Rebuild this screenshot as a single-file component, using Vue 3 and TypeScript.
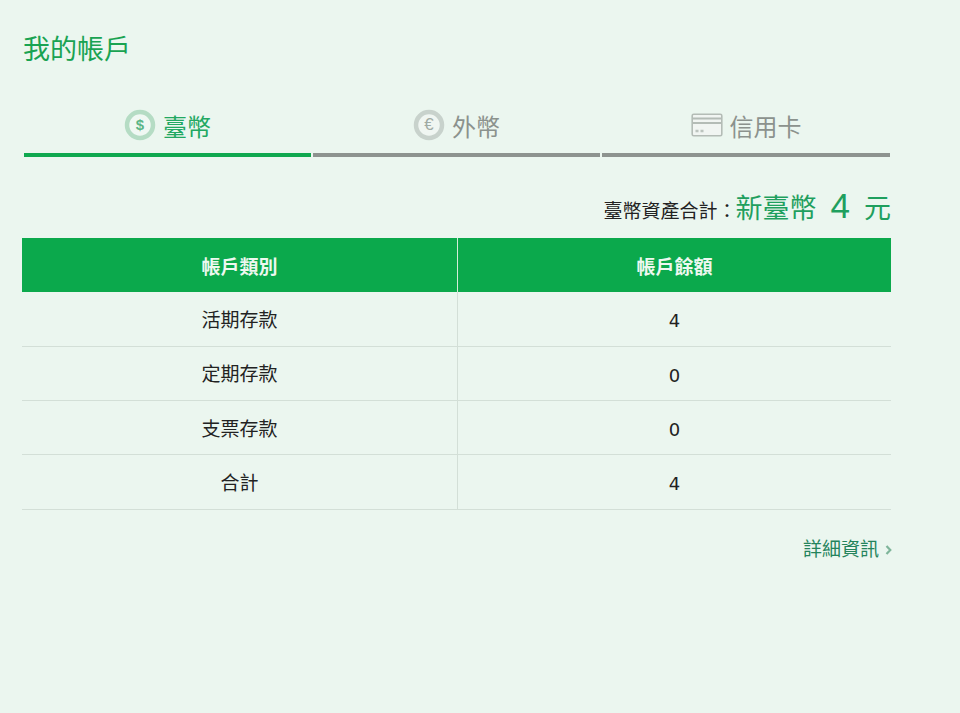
<script setup lang="ts">
interface Row { name: string; value: number }
const rows: Row[] = [
  { name: '活期存款', value: 4 },
  { name: '定期存款', value: 0 },
  { name: '支票存款', value: 0 },
  { name: '合計', value: 4 },
]
</script>

<template>
  <main class="page">
    <h1 class="title">我的帳戶</h1>
    <nav class="tabs">
      <div class="tab active">
        <svg class="coin" width="32" height="32" viewBox="0 0 32 32">
          <circle cx="16" cy="16" r="13" fill="#f0f8f3" stroke="#b5dcc4" stroke-width="4.5" />
          <text x="16" y="21" text-anchor="middle" class="coin-text" fill="#5cb587">$</text>
        </svg>
        <span>臺幣</span>
      </div>
      <div class="tab">
        <svg class="coin" width="32" height="32" viewBox="0 0 32 32">
          <circle cx="16" cy="16" r="13" fill="#f0f6f2" stroke="#c8d2cc" stroke-width="4.5" />
          <text x="16" y="21" text-anchor="middle" class="coin-text thin" fill="#a0aaa3">€</text>
        </svg>
        <span>外幣</span>
      </div>
      <div class="tab">
        <svg class="card" width="32" height="24" viewBox="0 0 32 24" fill="none">
          <rect x="1.2" y="1.2" width="29.6" height="21.6" rx="1.5" fill="#f1f5f2" stroke="#b4bcb6" stroke-width="1.6" />
          <path d="M1.5 5.5H30.5M1.5 10H30.5" stroke="#b4bcb6" stroke-width="1.8" />
          <path d="M4.5 18H7.5M9.5 18H12.5" stroke="#bcc4be" stroke-width="2.4" />
        </svg>
        <span>信用卡</span>
      </div>
    </nav>
    <p class="total">
      <span class="total-label">臺幣資產合計：</span><span class="total-value">新臺幣<b>4</b>元</span>
    </p>
    <table class="grid">
      <thead>
        <tr><th>帳戶類別</th><th>帳戶餘額</th></tr>
      </thead>
      <tbody>
        <tr v-for="row in rows" :key="row.name">
          <td>{{ row.name }}</td>
          <td class="num">{{ row.value }}</td>
        </tr>
      </tbody>
    </table>
    <div class="more">
      <span>詳細資訊</span>
      <svg width="7" height="10" viewBox="0 0 7 10" fill="none"><path d="M1.5 1L5.3 5L1.5 9" stroke="#7fb59a" stroke-width="2.2" /></svg>
    </div>
  </main>
</template>

<style>
html, body { margin: 0; background: #ebf6ef; }
</style>

<style scoped>
.page {
  box-sizing: border-box;
  width: 960px;
  height: 713px;
  padding: 33px 68px 0 22px;
  background: #ebf6ef;
  font-family: "Liberation Sans", "Noto Sans CJK TC", sans-serif;
  overflow: hidden;
}
.title {
  margin: 0 0 0 1px;
  font-size: 27px;
  line-height: 34px;
  font-weight: 400;
  color: #19a352;
}
.tabs {
  display: grid;
  grid-template-columns: 287px 287px 288px;
  column-gap: 2px;
  margin: 32px 1px 0 2px;
}
.tab {
  display: flex;
  align-items: center;
  justify-content: center;
  gap: 7px;
  height: 58px;
  padding-bottom: 2px;
  box-sizing: border-box;
  border-bottom: 4px solid #8d938f;
  font-size: 24px;
  color: #8b928d;
}
.tab.active {
  border-bottom-color: #0fa84f;
  color: #22a862;
}
.coin-text {
  font-family: "Liberation Sans", sans-serif;
  font-size: 15px;
  font-weight: 700;
}
.coin-text.thin { font-weight: 400; font-size: 17px; }
.total {
  display: flex;
  align-items: center;
  justify-content: flex-end;
  height: 38px;
  margin: 30px 1px 13px 0;
  box-sizing: border-box;
}
.total-label {
  font-size: 19px;
  color: #222;
  margin-right: -1px;
  margin-top: 7px;
}
.total-value {
  font-size: 27px;
  color: #1f9f5e;
}
.total-value b {
  font-family: "Liberation Sans", sans-serif;
  font-weight: 400;
  font-size: 35px;
  margin: 0 14px;
}
.grid {
  width: 869px;
  margin-top: 0;
  border-collapse: collapse;
  table-layout: fixed;
}
th:first-child, td:first-child { width: 435px; }
th {
  height: 54px;
  padding: 0;
  background: #0ba94c;
  color: #eef8f0;
  font-size: 19px;
  font-weight: 700;
}
th + th { border-left: 1px solid #d4ecd9; }
td {
  height: 54.25px;
  padding: 0 0 1px;
  box-sizing: border-box;
  text-align: center;
  font-size: 19px;
  color: #222;
  border-bottom: 1px solid #d3dfd7;
}
td + td { border-left: 1px solid #d3dfd7; }
td.num { padding-top: 4px; padding-bottom: 0; font-family: "DejaVu Sans", sans-serif; font-size: 18px; }
.more {
  display: flex;
  align-items: center;
  justify-content: flex-end;
  gap: 6px;
  width: 870px;
  margin-top: 27px;
  font-size: 19px;
  line-height: 26px;
  color: #24845c;
}
</style>
